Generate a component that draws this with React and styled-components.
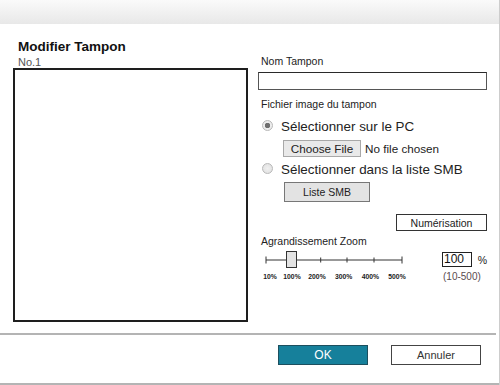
import styled, { createGlobalStyle } from "styled-components"

const GlobalStyle = createGlobalStyle`
    body {
        margin: 0;
        background: #fff;
        font-family: "Liberation Sans", Arial, sans-serif;
        color: #222;
    }
`

const ticks = [
    { x: 5, tall: true },
    { x: 59.7 },
    { x: 86 },
    { x: 113 },
    { x: 141, tall: true },
]

const scaleLabels = [
    { text: "10%", left: 2.3 },
    { text: "100%", left: 22.3 },
    { text: "200%", left: 47.3 },
    { text: "300%", left: 74 },
    { text: "400%", left: 100.7 },
    { text: "500%", left: 127.3 },
]

export default function App() {
    return <>
        <GlobalStyle />
        <Dialog>
            <Header />
            <Body>
                <LeftCol>
                    <Title>Modifier Tampon</Title>
                    <Number>No.1</Number>
                    <PreviewBox />
                </LeftCol>
                <RightCol>
                    <Label>Nom Tampon</Label>
                    <NameInput />
                    <Label $top={8}>Fichier image du tampon</Label>
                    <RadioRow $top={7}>
                        <Radio $checked />
                        Sélectionner sur le PC
                    </RadioRow>
                    <FileRow>
                        <FileButton>Choose File</FileButton>
                        <span>No file chosen</span>
                    </FileRow>
                    <RadioRow $top={4}>
                        <Radio />
                        Sélectionner dans la liste SMB
                    </RadioRow>
                    <SmbButton>Liste SMB</SmbButton>
                    <ScanButton>Numérisation</ScanButton>
                    <Label $top={4}>Agrandissement Zoom</Label>
                    <ZoomRow>
                        <Slider>
                            <svg width="150" height="20" viewBox="0 0 150 20">
                                <line x1="5" y1="10" x2="141" y2="10" stroke="#333" strokeWidth="1" />
                                {ticks.map((t) => (
                                    <line key={t.x} x1={t.x} x2={t.x} y1={t.tall ? 6.5 : 7.5} y2={t.tall ? 13.5 : 12.5} stroke="#333" strokeWidth="1" />
                                ))}
                                <rect x="25.5" y="1.5" width="10" height="16" fill="#e3e3e3" stroke="#333" strokeWidth="1" />
                            </svg>
                            <Scale>
                                {scaleLabels.map((l) => (
                                    <ScaleLabel key={l.text} $left={l.left}>{l.text}</ScaleLabel>
                                ))}
                            </Scale>
                        </Slider>
                        <ZoomGroup>
                            <ZoomInputRow>
                                <ZoomInput>100</ZoomInput>
                                <Percent>%</Percent>
                            </ZoomInputRow>
                            <Range>(10-500)</Range>
                        </ZoomGroup>
                    </ZoomRow>
                </RightCol>
            </Body>
            <Divider />
            <Footer>
                <OkButton>OK</OkButton>
                <CancelButton>Annuler</CancelButton>
            </Footer>
        </Dialog>
    </>
}

const Dialog = styled.div`
    width: 500px;
    height: 385px;
    box-sizing: border-box;
    border-right: 1px solid #cdcdcd;
    display: flex;
    flex-direction: column;
    overflow: hidden;
`

const Header = styled.div`
    height: 24px;
    flex-shrink: 0;
    background: linear-gradient(#fafafa, #e8e8e8);
`

const Body = styled.div`
    flex: 1;
    display: flex;
    gap: 10px;
    padding: 15px 0 11px 13px;
`

const LeftCol = styled.div`
    width: 235px;
    display: flex;
    flex-direction: column;
`

const Title = styled.div`
    font-size: 13.5px;
    font-weight: bold;
    line-height: 16px;
    color: #111;
    margin-left: 5px;
`

const Number = styled.div`
    font-size: 11px;
    line-height: 12px;
    color: #555;
    margin: 1px 0 0 5px;
`

const PreviewBox = styled.div`
    width: 235px;
    height: 254px;
    box-sizing: border-box;
    border: 2px solid #1e1e1e;
`

const RightCol = styled.div`
    width: 229px;
    display: flex;
    flex-direction: column;
    padding-top: 16px;
`

const Label = styled.div`
    font-size: 10.5px;
    line-height: 13px;
    padding-left: 3px;
    margin-top: ${(p) => p.$top || 0}px;
    color: #222;
`

const NameInput = styled.div`
    margin-top: 4px;
    height: 18px;
    box-sizing: border-box;
    border: 1px solid #555;
    border-top-color: #2a2a2a;
    background: #fff;
`

const RadioRow = styled.div`
    display: flex;
    align-items: center;
    gap: 8px;
    margin-top: ${(p) => p.$top}px;
    padding-left: 4px;
    font-size: 13.4px;
    line-height: 17px;
    color: #222;
`

const Radio = styled.span`
    width: 11px;
    height: 11px;
    box-sizing: border-box;
    border-radius: 50%;
    border: 1px solid #b8b8b8;
    background: radial-gradient(circle, ${(p) => (p.$checked ? "#6e6e6e 0 2.5px, #ececec 3px" : "#f0f0f0 0, #e2e2e2 5px")});
    margin-bottom: 3px;
    flex-shrink: 0;
`

const FileRow = styled.div`
    display: flex;
    align-items: center;
    gap: 4px;
    margin: 5px 0 0 25px;
    font-size: 11.7px;
    color: #222;
`

const FileButton = styled.div`
    width: 78px;
    height: 17px;
    box-sizing: border-box;
    border: 1px solid #a8a8a8;
    background: #e9e9e9;
    display: flex;
    align-items: center;
    justify-content: center;
`

const SmbButton = styled.div`
    margin: 4px 0 0 26px;
    width: 86px;
    height: 20px;
    box-sizing: border-box;
    border: 1px solid #777;
    background: #e3e3e3;
    font-size: 10.5px;
    display: flex;
    align-items: center;
    justify-content: center;
    color: #222;
`

const ScanButton = styled.div`
    align-self: flex-end;
    margin-top: 12px;
    width: 91px;
    height: 17px;
    box-sizing: border-box;
    border: 1px solid #333;
    background: #fff;
    font-size: 10.5px;
    display: flex;
    align-items: center;
    justify-content: center;
    color: #222;
`

const ZoomRow = styled.div`
    margin-top: 2px;
    padding-left: 3px;
    display: flex;
    justify-content: space-between;
`

const Slider = styled.div`
    width: 150px;
    display: flex;
    flex-direction: column;
    svg {
        display: block;
    }
`

const Scale = styled.div`
    position: relative;
    height: 10px;
    margin-top: 2px;
`

const ScaleLabel = styled.span`
    position: absolute;
    top: 0;
    left: ${(p) => p.$left}px;
    font-size: 6.8px;
    font-weight: bold;
    line-height: 10px;
    color: #222;
`

const ZoomGroup = styled.div`
    width: 45px;
    display: flex;
    flex-direction: column;
    padding-top: 2px;
`

const ZoomInputRow = styled.div`
    display: flex;
    align-items: center;
    gap: 6px;
`

const ZoomInput = styled.div`
    width: 32px;
    height: 15px;
    box-sizing: border-box;
    border: 1px solid #222;
    font-size: 12px;
    line-height: 13px;
    padding-left: 1px;
    color: #111;
`

const Percent = styled.span`
    font-size: 10.5px;
    color: #222;
`

const Range = styled.div`
    margin-top: 4px;
    padding-left: 1px;
    font-size: 10px;
    line-height: 12px;
    color: #5a4b50;
`

const Divider = styled.div`
    height: 2px;
    flex-shrink: 0;
    background: #b4b4b4;
    margin-right: 3px;
`

const Footer = styled.div`
    height: 50px;
    flex-shrink: 0;
    box-sizing: border-box;
    display: flex;
    justify-content: flex-end;
    align-items: flex-start;
    gap: 23px;
    padding: 10px 18px 0 0;
    border-bottom: 2px solid #b4b4b4;
`

const OkButton = styled.div`
    width: 90px;
    height: 20px;
    box-sizing: border-box;
    border: 1px solid #1c4f5e;
    background: #16809b;
    color: #fff;
    font-size: 12px;
    display: flex;
    align-items: center;
    justify-content: center;
`

const CancelButton = styled.div`
    width: 90px;
    height: 20px;
    box-sizing: border-box;
    border: 1px solid #444;
    background: #fff;
    color: #333;
    font-size: 11px;
    display: flex;
    align-items: center;
    justify-content: center;
`
